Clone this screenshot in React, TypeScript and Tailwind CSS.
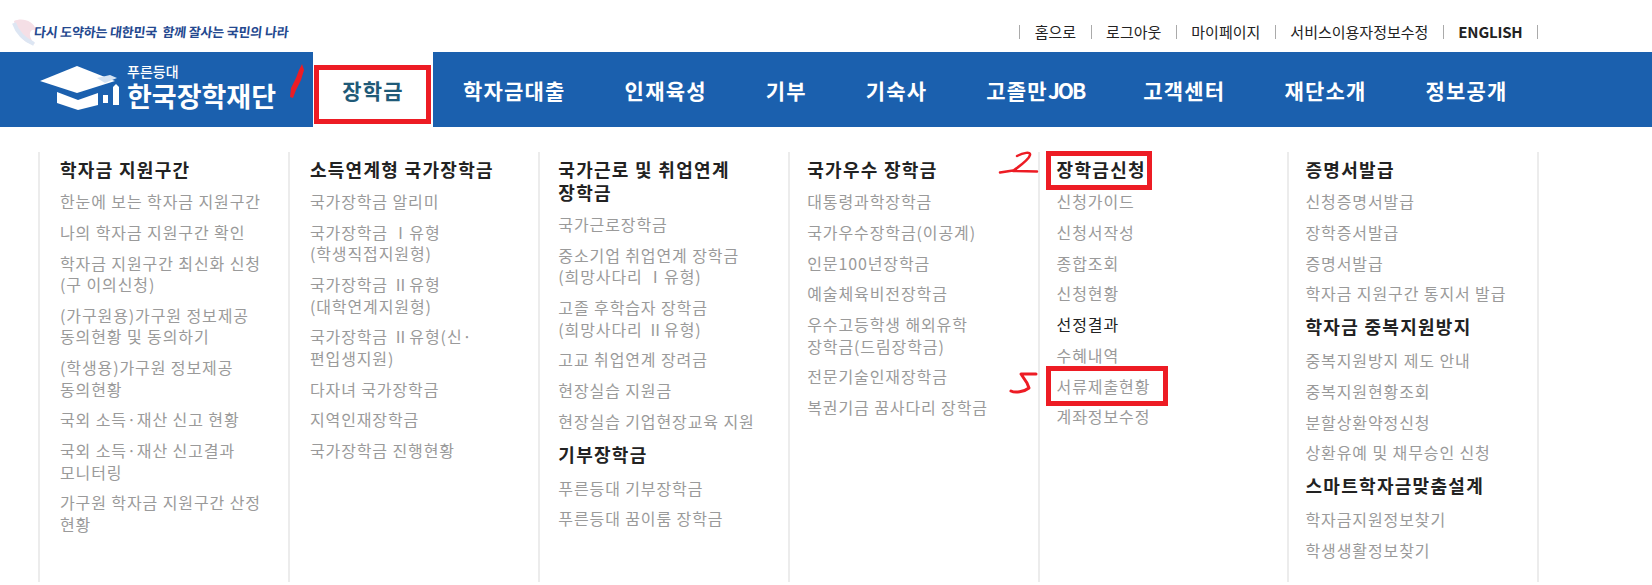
import React from "react";

const cols: { t: string; items: string[] }[][] = [
  [{ t: "학자금 지원구간", items: ["한눈에 보는 학자금 지원구간", "나의 학자금 지원구간 확인", "학자금 지원구간 최신화 신청\n(구 이의신청)", "(가구원용)가구원 정보제공\n동의현황 및 동의하기", "(학생용)가구원 정보제공\n동의현황", "국외 소득·재산 신고 현황", "국외 소득·재산 신고결과\n모니터링", "가구원 학자금 지원구간 산정\n현황"] }],
  [{ t: "소득연계형 국가장학금", items: ["국가장학금 알리미", "국가장학금 Ⅰ유형\n(학생직접지원형)", "국가장학금 Ⅱ유형\n(대학연계지원형)", "국가장학금 Ⅱ유형(신·\n편입생지원)", "다자녀 국가장학금", "지역인재장학금", "국가장학금 진행현황"] }],
  [
    { t: "국가근로 및 취업연계\n장학금", items: ["국가근로장학금", "중소기업 취업연계 장학금\n(희망사다리 Ⅰ유형)", "고졸 후학습자 장학금\n(희망사다리 Ⅱ유형)", "고교 취업연계 장려금", "현장실습 지원금", "현장실습 기업현장교육 지원"] },
    { t: "기부장학금", items: ["푸른등대 기부장학금", "푸른등대 꿈이룸 장학금"] },
  ],
  [{ t: "국가우수 장학금", items: ["대통령과학장학금", "국가우수장학금(이공계)", "인문100년장학금", "예술체육비전장학금", "우수고등학생 해외유학\n장학금(드림장학금)", "전문기술인재장학금", "복권기금 꿈사다리 장학금"] }],
  [{ t: "장학금신청", items: ["신청가이드", "신청서작성", "종합조회", "신청현황", "선정결과", "수혜내역", "서류제출현황", "계좌정보수정"] }],
  [
    { t: "증명서발급", items: ["신청증명서발급", "장학증서발급", "증명서발급", "학자금 지원구간 통지서 발급"] },
    { t: "학자금 중복지원방지", items: ["중복지원방지 제도 안내", "중복지원현황조회", "분할상환약정신청", "상환유예 및 채무승인 신청"] },
    { t: "스마트학자금맞춤설계", items: ["학자금지원정보찾기", "학생생활정보찾기"] },
  ],
];
const colPad = ["pl-[20px]", "pl-[20px]", "pl-[18.5px]", "pl-[17.5px]", "pl-[17px]", "pl-[16px]"];
const nav = ["학자금대출", "인재육성", "기부", "기숙사", "고졸만JOB", "고객센터", "재단소개", "정보공개"];
const top = ["홈으로", "로그아웃", "마이페이지", "서비스이용자정보수정", "ENGLISH"];

export default function App() {
  return (
    <div className="w-[1652px] h-[585px] overflow-hidden bg-white" style={{ fontFamily: '"Noto Sans CJK KR", "Noto Sans", sans-serif' }}>
      <div className="h-[52px] flex items-start justify-between">
        <div className="flex items-center pl-3 pt-[18px]">
          <svg width="26" height="28" viewBox="0 0 26 28">
            <path d="M2 3 C10 -1 22 3 24 12 C16 10 16 20 23 26 C11 26 4 15 2 3Z" fill="#f5dfe6" />
            <path d="M2 5 C5 14 11 21 22 26" stroke="#dde6f3" strokeWidth="4" fill="none" />
          </svg>
          <span className="text-[13px] font-bold text-[#24488f] -ml-[4px] tracking-[-0.2px] [transform:skewX(-6deg)]">다시 도약하는 대한민국 &nbsp;함께 잘사는 국민의 나라</span>
        </div>
        <div className="flex items-center pt-[25px] pr-[114px] text-[15px] text-[#222]">
          <i className="w-px h-[14px] bg-[#aaa]" />
          {top.map((t) => (
            <React.Fragment key={t}>
              <span className={`px-[14.5px] leading-[14px] ${t === "ENGLISH" ? "font-bold tracking-[-0.2px]" : ""}`}>{t}</span>
              <i className="w-px h-[14px] bg-[#aaa]" />
            </React.Fragment>
          ))}
        </div>
      </div>
      <div className="h-[75px] bg-[#1b60ae] flex">
        <div className="w-[313px] flex items-start pl-[40px] pt-[11px]">
          <svg width="87" height="47" viewBox="0 0 87 47" fill="white">
            <path d="M0 18 L37 3 L75 18 L37 30Z" />
            <path d="M17 29 L38 37 L58 30 L58 42 L38 47 L17 40Z" />
            <path d="M57 15 L70 12 L77 15 L65 20Z" fill="#d5e3f3" />
            <path d="M73 24 L76 21 L79 24 L79 42 L73 42Z" />
            <rect x="63" y="32" width="5" height="8" />
          </svg>
          <div className="flex flex-col text-white font-bold">
            <span className="text-[14px] leading-[16px] font-medium">푸른등대</span>
            <span className="text-[27px] leading-[28px] mt-[3px]">한국장학재단</span>
          </div>
        </div>
        <div className="relative w-[120px] h-full bg-white flex items-center justify-center pt-[3px] text-[21px] tracking-[1.2px] font-bold text-[#1f5a78]">
          <span className="absolute left-[1px] top-[13px] w-[117px] h-[59px] border-[5px] border-[#ed1c24]" />
          장학금
          <svg className="absolute -left-[28px] top-[6px]" width="30" height="46" viewBox="285 58 30 46">
            <path d="M302 64 L304 70 L301 80 L296 90 L293 98 L290 97 L291 88 L296 78 L299 70Z" fill="#ed1c24" />
          </svg>
        </div>
        <div className="flex items-center pl-[30px] pt-[3px] gap-[59px] text-white text-[21px] tracking-[1.2px] font-bold">
          {nav.map((n) =>
            n === "고졸만JOB" ? (
              <span key={n}>
                고졸만<span className="tracking-[-2px]">JOB</span>
              </span>
            ) : (
              <span key={n}>{n}</span>
            ),
          )}
        </div>
      </div>
      <div className="flex pl-[38px] pt-[25px]">
        {cols.map((groups, ci) => (
          <div key={ci} className={`h-[430px] shrink-0 border-l-2 border-[#ececec] ${colPad[ci]} ${ci === 5 ? "border-r-2 w-[251.9px]" : "w-[249.9px]"}`}>
            {groups.map((g, gi) => (
              <div key={g.t}>
                <h3 className={`relative whitespace-pre-line text-[18px] tracking-[1.3px] font-bold leading-[23px] text-[#222] pt-[6px] ${gi === 0 ? "pb-[5px]" : "pb-[7px]"}`}>
                  {g.t}
                  {g.t === "장학금신청" && (
                    <>
                      <span className="absolute -left-[11px] -top-[1px] w-[106px] h-[39px] border-[5px] border-[#ed1c24]" />
                      <svg className="absolute -left-[62px] -top-[2px]" width="50" height="35" viewBox="995 150 50 35">
                        <path d="M1017 156 C1023 153 1031 151 1030 155 C1029 160 1018 167 1013 171 L1037 171.5 M1000 172.5 L1013 170.5" stroke="#ed1c24" strokeWidth="2.5" fill="none" strokeLinecap="round" strokeLinejoin="round" />
                      </svg>
                    </>
                  )}
                </h3>
                <ul>
                  {g.items.map((it) => (
                    <li key={it} className={`relative whitespace-pre-line text-[16px] tracking-[0.9px] leading-[21.5px] pt-[5px] pb-[4.25px] ${it === "선정결과" ? "text-[#222]" : "text-[#9a9a9a]"}`}>
                      {it}
                      {it === "서류제출현황" && (
                        <>
                          <span className="absolute -left-[11px] -top-[5px] w-[122px] h-[40px] border-[5px] border-[#ed1c24]" />
                          <svg className="absolute -left-[53px] -top-[3px]" width="40" height="32" viewBox="1005 368 40 32">
                            <path d="M1037 374 L1022 374 L1028 383 L1030 388 C1025 392 1016 393 1012 391" stroke="#ed1c24" strokeWidth="3" fill="none" strokeLinecap="round" strokeLinejoin="round" />
                          </svg>
                        </>
                      )}
                    </li>
                  ))}
                </ul>
              </div>
            ))}
          </div>
        ))}
      </div>
    </div>
  );
}
